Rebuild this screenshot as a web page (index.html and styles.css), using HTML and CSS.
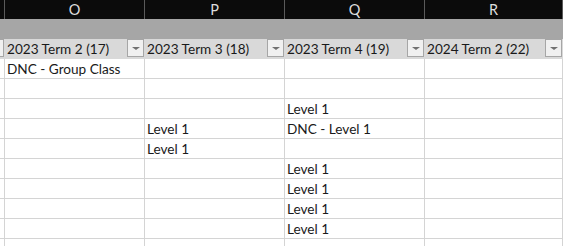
FILE: index.html
```html
<!DOCTYPE html>
<html lang="en">

<head>
    <meta charset="UTF-8">
    <title>Sheet - Terms</title>
    <link rel="stylesheet" href="styles.css">
</head>

<body>
    <div class="sheet">
        <!-- column letters -->
        <div class="row col-heads">
            <div class="cell stub"></div>
            <div class="cell">O</div>
            <div class="cell">P</div>
            <div class="cell">Q</div>
            <div class="cell">R</div>
        </div>

        <div class="row band">
            <div class="cell stub"></div>
            <div class="cell"></div>
            <div class="cell"></div>
            <div class="cell"></div>
            <div class="cell"></div>
        </div>

        <!-- filter header -->
        <div class="row filters">
            <div class="cell stub"><span class="drop cut"></span></div>
            <div class="cell"><span>2023 Term 2 (17)</span><span class="drop"></span></div>
            <div class="cell"><span>2023 Term 3 (18)</span><span class="drop"></span></div>
            <div class="cell"><span>2023 Term 4 (19)</span><span class="drop"></span></div>
            <div class="cell"><span>2024 Term 2 (22)</span><span class="drop"></span></div>
        </div>

        <div class="row data">
            <div class="cell stub"></div>
            <div class="cell">DNC - Group Class</div>
            <div class="cell"></div>
            <div class="cell"></div>
            <div class="cell"></div>
        </div>
        <div class="row data">
            <div class="cell stub"></div>
            <div class="cell"></div>
            <div class="cell"></div>
            <div class="cell"></div>
            <div class="cell"></div>
        </div>
        <div class="row data">
            <div class="cell stub"></div>
            <div class="cell"></div>
            <div class="cell"></div>
            <div class="cell">Level 1</div>
            <div class="cell"></div>
        </div>
        <div class="row data">
            <div class="cell stub"></div>
            <div class="cell"></div>
            <div class="cell">Level 1</div>
            <div class="cell">DNC - Level 1</div>
            <div class="cell"></div>
        </div>
        <div class="row data">
            <div class="cell stub"></div>
            <div class="cell"></div>
            <div class="cell">Level 1</div>
            <div class="cell"></div>
            <div class="cell"></div>
        </div>
        <div class="row data">
            <div class="cell stub"></div>
            <div class="cell"></div>
            <div class="cell"></div>
            <div class="cell">Level 1</div>
            <div class="cell"></div>
        </div>
        <div class="row data">
            <div class="cell stub"></div>
            <div class="cell"></div>
            <div class="cell"></div>
            <div class="cell">Level 1</div>
            <div class="cell"></div>
        </div>
        <div class="row data">
            <div class="cell stub"></div>
            <div class="cell"></div>
            <div class="cell"></div>
            <div class="cell">Level 1</div>
            <div class="cell"></div>
        </div>
        <div class="row data">
            <div class="cell stub"></div>
            <div class="cell"></div>
            <div class="cell"></div>
            <div class="cell">Level 1</div>
            <div class="cell"></div>
        </div>
        <div class="row data">
            <div class="cell stub"></div>
            <div class="cell"></div>
            <div class="cell"></div>
            <div class="cell"></div>
            <div class="cell"></div>
        </div>
    </div>
</body>

</html>
```

FILE: styles.css
```css
* {
    margin: 0;
    padding: 0;
    box-sizing: border-box;
}

body {
    font-family: Lato, 'Open Sans', sans-serif;
    font-size: 13.6px;
    color: #1a1a1a;
    background: white;
    overflow: hidden;
}

.sheet {
    width: 563px;
    height: 246px;
    overflow: hidden;
}

.row {
    display: grid;
    grid-template-columns: 5px 140px 140px 140px 1fr;
    height: 20px;
}

.cell {
    border-right: 1px solid #d4d4d4;
    border-bottom: 1px solid #d4d4d4;
    padding: 0 3px 0 2px;
    display: flex;
    align-items: flex-end;
    line-height: 18px;
    white-space: nowrap;
    overflow: hidden;
}

.cell.stub {
    padding: 0;
}

/* column letters */
.col-heads {
    height: 19px;
    background: #0b0b0b;
}

.col-heads .cell {
    justify-content: center;
    align-items: center;
    font-size: 14.5px;
    color: #dcdcdc;
    border-right-color: #5a5a5a;
    border-bottom: none;
    padding: 1px 0 0 0;
}

.band {
    background: #a6a6a6;
}

.band .cell {
    border-color: #a6a6a6;
}

/* filter row */
.filters {
    background: #d9d9d9;
}

.filters .cell {
    border-color: #d9d9d9;
    justify-content: space-between;
    padding-right: 0;
}

.drop {
    width: 17px;
    height: 18px;
    margin-bottom: 1px;
    background: #f0f0f0;
    border: 1px solid #a6a6a6;
    position: relative;
    flex-shrink: 0;
}

.drop::after {
    content: '';
    position: absolute;
    left: 4px;
    top: 7px;
    border-left: 4px solid transparent;
    border-right: 4px solid transparent;
    border-top: 3px solid #707070;
}

.drop.cut {
    width: 4px;
    border-left: none;
}

.drop.cut::after {
    display: none;
}
```
